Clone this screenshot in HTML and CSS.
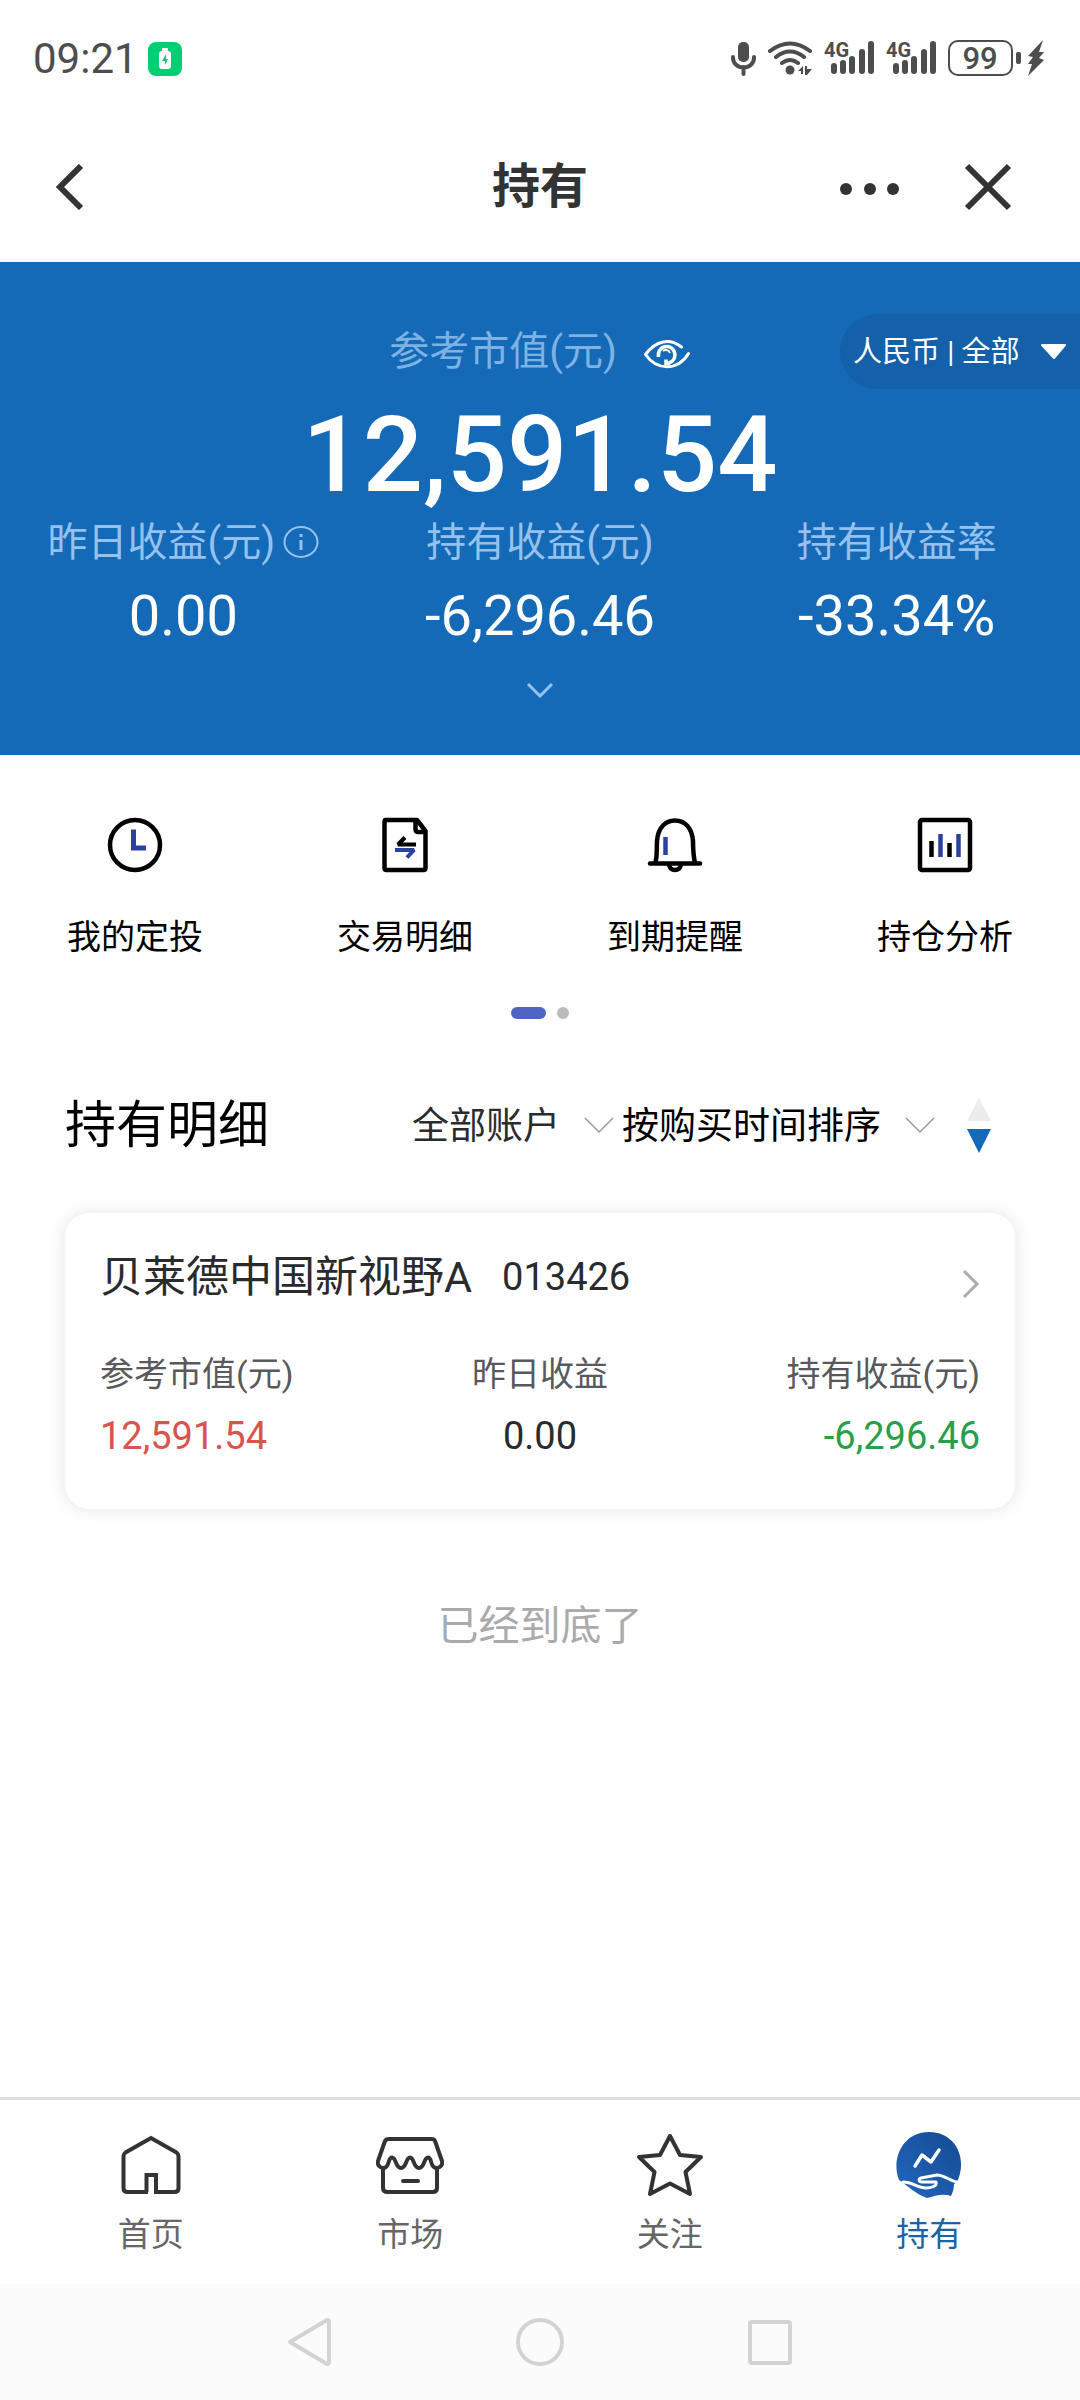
FILE: index.html
```html
<!DOCTYPE html>
<html lang="zh-CN">

<head>
    <meta charset="UTF-8">
    <meta name="viewport" content="width=device-width, initial-scale=1.0">
    <title>持有</title>
    <link rel="stylesheet" href="styles.css">
</head>

<body>

    <div class="page">
        <!-- 系统状态栏 -->
        <div class="status-bar">
            <div class="status-left">
                <span class="time">09:21</span>
                <svg width="34" height="34" viewBox="0 0 34 34">
                    <rect width="34" height="34" rx="8" fill="#04ce74" />
                    <rect x="14" y="6" width="6" height="3" rx="1" fill="#fff" />
                    <rect x="11" y="9" width="12" height="18" rx="3" fill="#fff" />
                    <path d="M18 12l-4 7h3v4l3-6h-2z" fill="#04ce74" />
                </svg>
            </div>
            <div class="status-right">
                <svg width="25" height="36" viewBox="0 0 25 36">
                    <rect x="7" y="1" width="11" height="20" rx="5" fill="#4d4d4d" />
                    <path d="M2 16v1a10 9 0 0 0 21 0v-1M12.500 26v7" fill="none" stroke="#4d4d4d" stroke-width="4" stroke-linecap="round" />
                </svg>
                <svg width="44" height="36" viewBox="0 0 44 36">
                    <path d="M2 10Q22-5 42 10M8 16Q22 5 36 16M14 22Q22 16 30 22" fill="none" stroke="#4d4d4d" stroke-width="4" stroke-linecap="round" />
                    <circle cx="22" cy="29" r="4.500" fill="#4d4d4d" />
                    <path d="M30 30l5-5v8h-2v-3zM37 25h2v3h5l-5 6h-2z" fill="#4d4d4d" />
                </svg>
                <svg class="signal" width="50" height="42" viewBox="0 0 50 42">
                    <text x="0" y="19">4G</text>
                    <path d="M10 28v5M19 25v8M28 21v12M38 14v19M47 6v27" stroke="#4d4d4d" stroke-width="6" stroke-linecap="round" />
                </svg>
                <svg class="signal" width="50" height="42" viewBox="0 0 50 42">
                    <text x="0" y="19">4G</text>
                    <path d="M10 28v5M19 25v8M28 21v12M38 14v19M47 6v27" stroke="#4d4d4d" stroke-width="6" stroke-linecap="round" />
                </svg>
                <svg class="battery" width="97" height="38" viewBox="0 0 97 38">
                    <rect x="1" y="1" width="63" height="34" rx="9" fill="none" stroke="#4d4d4d" stroke-width="2" />
                    <text x="32" y="29" text-anchor="middle">99</text>
                    <rect x="68" y="12" width="5" height="12" rx="2" fill="#4d4d4d" />
                    <path d="M95 0L80 16l5 1-5 7h4l-4 12 16-16-5-2 5-6h-5z" fill="#4d4d4d" />
                </svg>
            </div>
        </div>

        <!-- 标题栏 -->
        <header class="header">
            <button class="icon-btn" aria-label="返回">
                <svg width="28" height="46" viewBox="0 0 28 46">
                    <path d="M25 2L4 23l21 21" fill="none" stroke="#333" stroke-width="6" />
                </svg>
            </button>
            <h1>持有</h1>
            <div class="header-right">
                <button class="icon-btn" aria-label="更多">
                    <svg width="60" height="48" viewBox="0 0 60 48">
                        <circle cx="6" cy="26" r="6" fill="#333" />
                        <circle cx="30" cy="26" r="6" fill="#333" />
                        <circle cx="53" cy="26" r="6" fill="#333" />
                    </svg>
                </button>
                <button class="icon-btn" aria-label="关闭">
                    <svg width="48" height="48" viewBox="0 0 48 48">
                        <path d="M3 3l42 42M45 3L3 45" stroke="#333" stroke-width="6" />
                    </svg>
                </button>
            </div>
        </header>

        <!-- 资产总览 -->
        <section class="summary">
            <div class="summary-top">
                <div class="summary-label">
                    <span>参考市值(元)</span>
                    <button class="icon-btn" aria-label="隐藏金额">
                        <svg width="48" height="36" viewBox="0 0 48 36" fill="none" stroke="#fff">
                            <path d="M38.500 13C27 4 13 6 2.500 20.500c11 16 32 17 43-1" stroke-width="3" stroke-linecap="round" />
                            <path d="M15.500 23c-1-6 3-10.500 8-10.500s8.500 4 8.500 8.500-4 8.500-9 8.500v-4" stroke-width="3.500" />
                            <path d="M20 17c2-2 6-1 7 2" stroke-width="2" />
                        </svg>
                    </button>
                </div>
                <label class="currency">
                    <select aria-label="币种">
                        <option>人民币 | 全部</option>
                    </select>
                    <svg width="27" height="16" viewBox="0 0 27 16">
                        <path d="M2 1h23l-11 13z" fill="#fff" stroke="#fff" stroke-width="2" stroke-linejoin="round" />
                    </svg>
                </label>
            </div>
            <div class="total">12,591.54</div>
            <dl class="stats">
                <div>
                    <dt>昨日收益(元)
                        <svg width="36" height="34" viewBox="0 0 36 34">
                            <ellipse cx="18" cy="16" rx="16.500" ry="15" fill="none" stroke="#94c1ee" stroke-width="2" />
                            <path d="M18 14v10M18 8v3" stroke="#94c1ee" stroke-width="3" />
                        </svg>
                    </dt>
                    <dd>0.00</dd>
                </div>
                <div>
                    <dt>持有收益(元)</dt>
                    <dd>-6,296.46</dd>
                </div>
                <div>
                    <dt>持有收益率</dt>
                    <dd>-33.34%</dd>
                </div>
            </dl>
            <button class="icon-btn expand" aria-label="展开">
                <svg width="28" height="16" viewBox="0 0 28 16">
                    <path d="M2 2l12 12L26 2" fill="none" stroke="#94c1ee" stroke-width="3" />
                </svg>
            </button>
        </section>

        <!-- 快捷入口 -->
        <nav class="menu">
            <a href="#">
                <svg width="56" height="56" viewBox="0 0 56 56" fill="none">
                    <circle cx="28" cy="28" r="25" stroke="#000" stroke-width="4.500" />
                    <path d="M26.500 12.500V31H39" stroke="#2b41a2" stroke-width="5" />
                </svg>
                <span>我的定投</span>
            </a>
            <a href="#">
                <svg width="56" height="56" viewBox="0 0 56 56" fill="none" stroke-width="4.500">
                    <path d="M8 3h32l8.500 11v37q0 2-2 2H9.500q-2 0-2-2V5q0-2 2-2z" stroke="#000" stroke-linejoin="round" />
                    <path d="M38.500 4v8q0 3 3 3h7" stroke="#000" />
                    <path d="M39 27.500H21l7-7" stroke="#000" stroke-width="4" stroke-linejoin="bevel" />
                    <path d="M18 33h19l-7 7.500" stroke="#2b41a2" stroke-width="4" stroke-linejoin="bevel" />
                </svg>
                <span>交易明细</span>
            </a>
            <a href="#">
                <svg width="56" height="56" viewBox="0 0 56 56" fill="none" stroke-width="4.500">
                    <path d="M8.500 46c2-9 1-14 1.500-22C11 11 18 3.500 28 3.500S45 11 46 24c0 8 0 13 2 22" stroke="#000" />
                    <path d="M3 46.500h50M22 47c0 8 12 8 12 0" stroke="#000" stroke-linecap="round" />
                    <path d="M18.500 20v18" stroke="#2b41a2" />
                </svg>
                <span>到期提醒</span>
            </a>
            <a href="#">
                <svg width="56" height="56" viewBox="0 0 56 56" fill="none" stroke-width="4.500">
                    <rect x="3" y="3" width="50" height="50" rx="2" stroke="#000" />
                    <path d="M14.500 24v16M32.500 26v14" stroke="#000" />
                    <path d="M23.500 17v23M41.500 17v23" stroke="#2b41a2" />
                </svg>
                <span>持仓分析</span>
            </a>
        </nav>
        <div class="dots">
            <span class="dot active"></span>
            <span class="dot"></span>
        </div>

        <!-- 持有明细 -->
        <main class="detail">
            <div class="detail-head">
                <h2>持有明细</h2>
                <div class="filters">
                    <label class="filter">
                        <select aria-label="账户">
                            <option>全部账户</option>
                        </select>
                        <svg width="30" height="18" viewBox="0 0 30 18">
                            <path d="M1 1l14 14L29 1" fill="none" stroke="#999" stroke-width="1.500" />
                        </svg>
                    </label>
                    <label class="filter dark">
                        <select aria-label="排序方式">
                            <option>按购买时间排序</option>
                        </select>
                        <svg width="30" height="18" viewBox="0 0 30 18">
                            <path d="M1 1l14 14L29 1" fill="none" stroke="#999" stroke-width="1.500" />
                        </svg>
                    </label>
                    <button class="icon-btn sort" aria-label="升降序">
                        <svg width="24" height="56" viewBox="0 0 24 56">
                            <path d="M12 0l12 23H0z" fill="#ececec" />
                            <path d="M0 31h24L12 55z" fill="#146ab6" />
                        </svg>
                    </button>
                </div>
            </div>

            <article class="card">
                <div class="card-head">
                    <h3>贝莱德中国新视野A</h3>
                    <span class="code">013426</span>
                    <svg class="arrow" width="18" height="30" viewBox="0 0 18 30">
                        <path d="M2 2l13 13L2 28" fill="none" stroke="#a9adb1" stroke-width="3" />
                    </svg>
                </div>
                <dl class="card-data">
                    <div>
                        <dt>参考市值(元)</dt>
                        <dd class="red">12,591.54</dd>
                    </div>
                    <div>
                        <dt>昨日收益</dt>
                        <dd>0.00</dd>
                    </div>
                    <div>
                        <dt>持有收益(元)</dt>
                        <dd class="green">-6,296.46</dd>
                    </div>
                </dl>
            </article>

            <p class="end">已经到底了</p>
        </main>

        <!-- 底部标签栏 -->
        <nav class="tab-bar">
            <a href="#">
                <svg width="68" height="68" viewBox="0 0 68 68" fill="none" stroke="#333" stroke-width="4">
                    <path d="M31 62H10.500q-4 0-4-4V26q0-2 2-3.500L34 8l25.500 14.500q2 1.500 2 3.500v32q0 4-4 4H39V45h-9.500v17" />
                </svg>
                <span>首页</span>
            </a>
            <a href="#">
                <svg width="68" height="68" viewBox="0 0 68 68" fill="none" stroke="#333" stroke-width="4" stroke-linejoin="round">
                    <path d="M13 9h43q2 0 3 2l7 20c1 4-2 7-5.500 7-7 0-4-10.500-8.500-10.500S49 38 43 38s-4.500-10.500-9-10.500S31 38 25 38s-4.500-10.500-9-10.500S14 38 7.500 38C4 38 1 35 2 31l7-20q1-2 4-2z" />
                    <path d="M7 38v20q0 4 4.500 4h45q4.500 0 4.500-4V38" />
                    <path d="M27 51h15" stroke-linecap="round" />
                </svg>
                <span>市场</span>
            </a>
            <a href="#">
                <svg width="68" height="68" viewBox="0 0 68 68" fill="none" stroke="#333" stroke-width="4" stroke-linejoin="round">
                    <path d="M34 6l10 19 21 2-15.500 15L54 64 34 53.500 14 64l4.500-22L3 27l21-2z" />
                </svg>
                <span>关注</span>
            </a>
            <a href="#" class="active">
                <svg width="68" height="68" viewBox="0 0 68 68" fill="none" stroke="#fff" stroke-linejoin="round" stroke-linecap="round">
                    <defs>
                        <linearGradient id="hold" x1="0" y1="1" x2="1" y2="0">
                            <stop offset="0" stop-color="#2167bd" />
                            <stop offset="1" stop-color="#164a93" />
                        </linearGradient>
                    </defs>
                    <path d="M4 50C-4 30 7 2 34 2s39 27 28 50l-3 2c0 4-1 8-3 12-8-3-16 0-24 2-10-3-19-12-28-18z" fill="url(#hold)" stroke="none" />
                    <path d="M20 36l7-11 9 7 8-12" stroke-width="3.500" />
                    <path d="M62 52c-7-1-13-7-20-7l-16 3c-3 1-2 4 1 4h14c2 4-5 6-10 6-9 0-13-6-23-6" stroke-width="3" />
                </svg>
                <span>持有</span>
            </a>
        </nav>

        <!-- 系统导航键 -->
        <div class="nav-keys">
            <button class="icon-btn" aria-label="返回键">
                <svg width="48" height="50" viewBox="0 0 48 50">
                    <path d="M41 3L4 25l37 22q2 0 2-2V5q0-2-2-2z" fill="none" stroke="#d3d3d3" stroke-width="4" stroke-linejoin="round" />
                </svg>
            </button>
            <button class="icon-btn" aria-label="主屏键">
                <svg width="50" height="50" viewBox="0 0 50 50">
                    <circle cx="25" cy="25" r="22" fill="none" stroke="#d3d3d3" stroke-width="4" />
                </svg>
            </button>
            <button class="icon-btn" aria-label="任务键">
                <svg width="50" height="50" viewBox="0 0 50 50">
                    <rect x="5" y="5" width="40" height="41" rx="2" fill="none" stroke="#d3d3d3" stroke-width="4" />
                </svg>
            </button>
        </div>
    </div>

</body>

</html>
```
FILE: styles.css
```css
* {
    box-sizing: border-box;
}

body {
    font-family: Roboto, "Noto Sans CJK SC", sans-serif;
    margin: 0;
    background-color: #fefefe;
    color: #000;
}

h1,
h2,
h3,
p,
dl,
dd {
    margin: 0;
    font-weight: 400;
}

a {
    color: inherit;
    text-decoration: none;
}

svg {
    display: block;
    flex-shrink: 0;
}

select {
    appearance: none;
    margin: 0;
    padding: 0;
    border: none;
    background: none;
    color: inherit;
    font: inherit;
    cursor: pointer;
}

.icon-btn {
    padding: 0;
    border: none;
    background: none;
    cursor: pointer;
}

.page {
    display: flex;
    flex-direction: column;
    min-height: 100vh;
}

/* 状态栏 */
.status-bar {
    display: flex;
    justify-content: space-between;
    align-items: center;
    height: 118px;
    padding: 0 35px 0 33px;
    color: #4d4d4d;
}

.status-left,
.status-right {
    display: flex;
    align-items: center;
    gap: 12px;
}

.status-left {
    gap: 10px;
}

.time {
    font-size: 42px;
    line-height: 48px;
}

.signal {
    overflow: visible;
}

.signal text {
    font-size: 20px;
    font-weight: 700;
    fill: #4d4d4d;
}

.battery text {
    font-size: 31px;
    font-weight: 500;
    fill: #4d4d4d;
}

/* 标题栏 */
.header {
    display: grid;
    grid-template-columns: 1fr auto 1fr;
    align-items: center;
    height: 144px;
    padding: 0 56px 6px;
}

.header > .icon-btn {
    justify-self: start;
}

.header h1 {
    color: #333;
    font-size: 48px;
    font-weight: 700;
    line-height: 64px;
}

.header-right {
    display: flex;
    justify-content: flex-end;
    gap: 64px;
    padding-right: 12px;
}

/* 资产总览 */
.summary {
    padding: 52px 0 57px;
    background-color: #146ab6;
    color: #fff;
    text-align: center;
}

.summary-top {
    display: grid;
    grid-template-columns: 1fr auto 1fr;
    align-items: center;
}

.summary-label {
    grid-column: 2;
    display: flex;
    align-items: center;
    gap: 26px;
    color: #7fb2e4;
    font-size: 40px;
    line-height: 48px;
}

.currency {
    justify-self: end;
    display: flex;
    align-items: center;
    gap: 20px;
    height: 75px;
    padding: 0 13px;
    border-radius: 38px 0 0 38px;
    background-color: #1460a9;
    font-size: 29px;
}

.total {
    margin-top: 14px;
    font-size: 106px;
    font-weight: 500;
    line-height: 104px;
}

.stats {
    display: grid;
    grid-template-columns: repeat(3, 1fr);
    margin-top: 12px;
    padding: 0 5px;
}

.stats dt {
    display: flex;
    justify-content: center;
    align-items: center;
    gap: 8px;
    color: #94c1ee;
    font-size: 40px;
    line-height: 48px;
}

.stats dd {
    margin-top: 17px;
    font-size: 56px;
    line-height: 64px;
}

.expand {
    display: block;
    margin: 34px auto 0;
}

/* 快捷入口 */
.menu {
    display: grid;
    grid-template-columns: repeat(4, 1fr);
    padding-top: 62px;
}

.menu a {
    display: flex;
    flex-direction: column;
    align-items: center;
    gap: 40px;
    font-size: 34px;
    line-height: 48px;
}

.dots {
    display: flex;
    justify-content: center;
    gap: 11px;
    margin-top: 46px;
}

.dot {
    width: 12px;
    height: 12px;
    border-radius: 6px;
    background-color: #bbb;
}

.dot.active {
    width: 35px;
    background-color: #5064c4;
}

/* 持有明细 */
.detail {
    flex: 1;
    padding: 75px 65px 0;
}

.detail-head {
    display: flex;
    justify-content: space-between;
    align-items: center;
    padding-right: 24px;
}

.detail-head h2 {
    font-size: 51px;
    line-height: 64px;
}

.filters {
    display: flex;
    align-items: center;
    gap: 8px;
    font-size: 37px;
}

.filter {
    display: flex;
    align-items: center;
    gap: 24px;
    color: #2a2b2d;
}

.filter.dark {
    color: #000;
}

.sort {
    margin-left: 24px;
}

.card {
    margin-top: 55px;
    padding: 34px 35px 49px;
    border-radius: 24px;
    background-color: #fff;
    box-shadow: 0 0 16px rgba(0, 0, 0, 0.1);
    color: #2a2b2d;
}

.card-head {
    display: flex;
    align-items: center;
}

.card-head h3 {
    font-size: 43px;
    line-height: 60px;
}

.code {
    margin-left: 30px;
    font-size: 38px;
}

.arrow {
    align-self: flex-end;
    margin: 0 0 8px auto;
}

.card-data {
    display: grid;
    grid-template-columns: repeat(3, 1fr);
    margin-top: 43px;
    line-height: 48px;
    text-align: center;
}

.card-data div:first-child {
    text-align: left;
}

.card-data div:last-child {
    text-align: right;
}

.card-data dt {
    color: #58595c;
    font-size: 34px;
}

.card-data dd {
    margin-top: 14px;
    font-size: 38px;
}

.card-data .red {
    color: #d9534f;
}

.card-data .green {
    color: #2a9f4a;
}

.end {
    margin-top: 87px;
    color: #aaa;
    font-size: 41px;
    line-height: 60px;
    text-align: center;
}

/* 底部标签栏 */
.tab-bar {
    display: grid;
    grid-template-columns: repeat(4, 1fr);
    padding: 30px 21px 29px;
    border-top: 3px solid #ddd;
    background-color: #fefefe;
}

.tab-bar a {
    display: flex;
    flex-direction: column;
    align-items: center;
    gap: 17px;
    color: #666;
    font-size: 33px;
    line-height: 40px;
}

.tab-bar a.active {
    color: #1a64a5;
}

/* 系统导航键 */
.nav-keys {
    display: flex;
    justify-content: center;
    height: 116px;
    background-color: #fbfbfb;
}

.nav-keys .icon-btn {
    display: flex;
    justify-content: center;
    align-items: center;
    width: 230px;
}
```
